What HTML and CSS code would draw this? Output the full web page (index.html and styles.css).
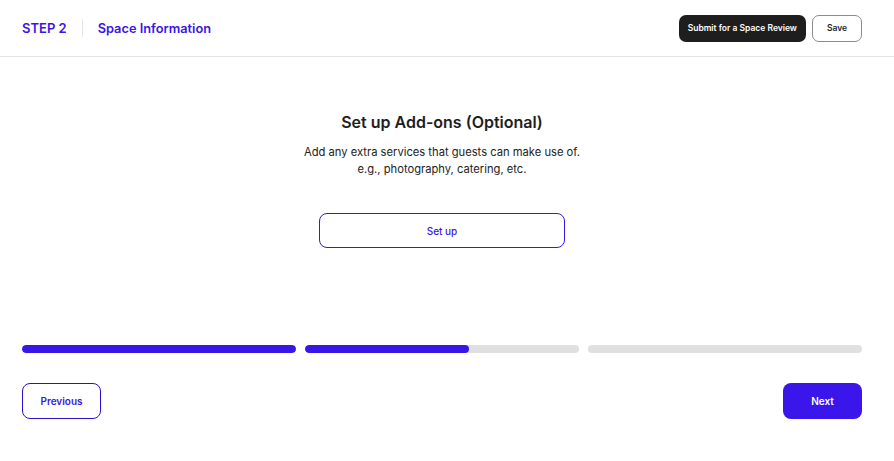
FILE: index.html
```html
<!DOCTYPE html>
<html>
<head>
<meta charset="utf-8">
<link rel="stylesheet" href="styles.css">
</head>
<body>
<header class="header">
  <div class="crumbs">
    <span class="step">STEP 2</span>
    <span class="divider"></span>
    <span class="section">Space Information</span>
  </div>
  <div class="actions">
    <button class="btn-dark">Submit for a Space Review</button>
    <button class="btn-save">Save</button>
  </div>
</header>
<main class="main">
  <h1 class="title">Set up Add-ons (Optional)</h1>
  <p class="desc">Add any extra services that guests can make use of.<br>e.g., photography, catering, etc.</p>
  <button class="btn-setup">Set up</button>
</main>
<div class="progress">
  <div class="bar"><div class="fill" style="width:100%"></div></div>
  <div class="bar"><div class="fill" style="width:60%"></div></div>
  <div class="bar"><div class="fill" style="width:0%"></div></div>
</div>
<div class="nav">
  <button class="btn-prev">Previous</button>
  <button class="btn-next">Next</button>
</div>
</body>
</html>
```
FILE: styles.css
```css
* { box-sizing: border-box; }
html, body { margin: 0; padding: 0; background: #fff; }
body { font-family: Inter, "Noto Sans", sans-serif; color: #1c1c1c; width: 894px; }
button { font-family: inherit; cursor: pointer; }

.header {
  height: 57px;
  border-bottom: 1px solid #e6e6e6;
  display: flex;
  align-items: center;
  justify-content: space-between;
  padding: 0 32px 0 22px;
}
.crumbs { display: flex; align-items: center; }
.step { font-size: 13px; font-weight: 600; color: #3a16e6; }
.divider { width: 1px; height: 18px; background: #e4e4e4; margin: 0 15px 0 15px; }
.section { font-size: 12.8px; font-weight: 600; color: #3a16e6; }
.actions { display: flex; gap: 6px; }
.btn-dark {
  height: 27px; padding: 0 9px; border: none; border-radius: 7px;
  background: #1e1e1e; color: #fff; font-size: 8.5px; font-weight: 600;
}
.btn-save {
  height: 27px; width: 50px; border: 1px solid #8c8c8c; border-radius: 7px;
  background: #fff; color: #1e1e1e; font-size: 8.5px; font-weight: 600;
}

.main {
  display: flex; flex-direction: column; align-items: center;
  padding: 55px 32px 0 22px;
  height: 288px;
}
.title { margin: 0; font-size: 16px; font-weight: 600; line-height: 20px; color: #1e1e1e; }
.desc { margin: 12px 0 0; font-size: 11.2px; line-height: 17px; text-align: center; color: #222; }
.btn-setup {
  margin-top: 35px; width: 246px; height: 35px;
  border: 1px solid #3a16e6; border-radius: 8px; background: #fff;
  color: #3a16e6; font-size: 10px; font-weight: 500;
}

.progress {
  display: flex; gap: 9px; padding: 0 32px 0 22px; height: 8px;
}
.bar { flex: 1; height: 8px; border-radius: 4px; background: #e0e0e0; overflow: hidden; }
.fill { height: 100%; background: #3a16e6; border-radius: 4px; }

.nav {
  display: flex; justify-content: space-between;
  padding: 30px 32px 0 22px;
}
.btn-prev {
  width: 79px; height: 36px; border: 1px solid #2a0fd0; border-radius: 8px;
  background: #fff; color: #3a16e6; font-size: 10px; font-weight: 600;
}
.btn-next {
  width: 79px; height: 36px; border: none; border-radius: 8px;
  background: #3a16ea; color: #fff; font-size: 10px; font-weight: 600;
}
```
